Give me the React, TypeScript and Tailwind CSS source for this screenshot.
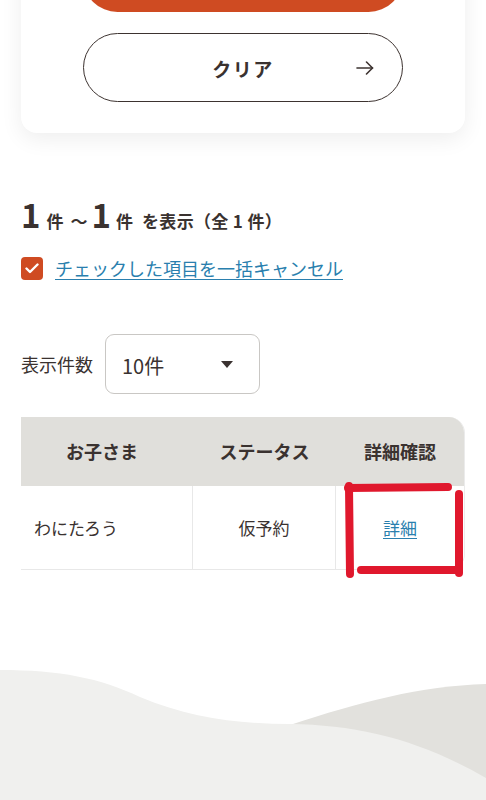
import React from "react";

const font = { fontFamily: '"Noto Sans CJK JP", "Noto Sans", sans-serif' };

const RedMark = () => (
  <svg
    className="pointer-events-none absolute left-[338px] top-[478px]"
    width="130"
    height="106"
    viewBox="0 0 130 106"
    fill="none"
    stroke="#e0182d"
    strokeWidth="8"
    strokeLinecap="round"
  >
    <path d="M10 10 L110 9" />
    <path d="M11 8 L12 96" />
    <path d="M121 16 L121 95" />
    <path d="M23 92 L121 92" />
  </svg>
);

const Waves = () => (
  <svg
    className="block mt-auto"
    width="486"
    height="200"
    viewBox="0 0 486 200"
    preserveAspectRatio="none"
  >
    <path
      d="M290 125 C360 102 420 86 486 84 L486 200 L290 200 Z"
      fill="#e2e1dd"
    />
    <path
      d="M0 70 C60 70 100 78 140 97 C190 118 240 124 290 124 C360 125 420 140 486 178 L486 200 L0 200 Z"
      fill="#f0f0ee"
    />
  </svg>
);

export default function App() {
  return (
    <div
      className="relative h-[800px] w-[486px] overflow-hidden bg-white text-[#3a3230] flex flex-col"
      style={font}
    >
      <div className="-mt-[100px] px-[21px]">
        {/* search card */}
        <div className="rounded-2xl bg-white pt-[43px] pb-[31px] shadow-[0_6px_22px_rgba(0,0,0,0.07)]">
          <div className="mx-auto h-[69px] w-[320px] rounded-full bg-[#cf4b22]" />
          <button className="relative mx-auto mt-[21px] flex h-[69px] w-[320px] items-center justify-center rounded-full border-[1.5px] border-[#3d3330] bg-white pt-[3px] text-[19px] font-bold tracking-[0.08em]">
            クリア
            <svg
              className="absolute right-[28px] top-1/2 -translate-y-1/2"
              width="18"
              height="14"
              viewBox="0 0 18 14"
              fill="none"
              stroke="#3d3330"
              strokeWidth="1.6"
              strokeLinecap="round"
              strokeLinejoin="round"
            >
              <path d="M1 7 H16.5" />
              <path d="M10.5 1 L16.5 7 L10.5 13" />
            </svg>
          </button>
        </div>

        {/* result count */}
        <div className="mt-[60px] flex items-baseline font-bold leading-[42px]">
          <span className="text-[33px]">1</span>
          <span className="ml-[6px] text-[17px]">件</span>
          <span className="ml-[7px] text-[17px]">～</span>
          <span className="ml-[4px] text-[33px]">1</span>
          <span className="ml-[5px] text-[17px]">件</span>
          <span className="ml-[9px] text-[17px] tracking-[0.02em]">を表示（全 1 件）</span>
        </div>

        <div className="mt-[13px] flex items-center gap-[12px]">
          <span className="flex h-[23px] w-[22px] items-center justify-center rounded-[4px] bg-[#cf4b22]">
            <svg
              width="14"
              height="11"
              viewBox="0 0 14 11"
              fill="none"
              stroke="#fff"
              strokeWidth="2.4"
              strokeLinecap="round"
              strokeLinejoin="round"
            >
              <path d="M1.5 5.5 L5 9 L12.5 1.5" />
            </svg>
          </span>
          <a className="text-[18px] leading-[26px] text-[#2a7fae] underline underline-offset-[3px] cursor-pointer">
            チェックした項目を一括キャンセル
          </a>
        </div>

        {/* page size */}
        <div className="mt-[53px] flex items-center gap-[12px]">
          <span className="text-[18px]">表示件数</span>
          <div className="flex h-[60px] w-[155px] items-center justify-between rounded-[9px] border border-[#c9c7c4] bg-white pl-[16px] pr-[26px]">
            <span className="mt-[4px] text-[20px]">10件</span>
            <svg width="12" height="7" viewBox="0 0 12 7">
              <path d="M0 0 H12 L6 7 Z" fill="#3a3230" />
            </svg>
          </div>
        </div>

        {/* table */}
        <div className="mt-[23px] overflow-hidden rounded-r-2xl border-r border-[#ebebeb]">
          <div className="grid grid-cols-[172px_143px_1fr] h-[69px] items-center bg-[#e0dfdb] text-[18px] font-bold">
            <div className="text-center pr-[10px]">お子さま</div>
            <div className="text-center">ステータス</div>
            <div className="text-center">詳細確認</div>
          </div>
          <div className="grid grid-cols-[172px_143px_1fr] h-[84px] items-stretch border-b border-[#e8e8e8] text-[17px]">
            <div className="flex items-center border-r border-[#e8e8e8] pl-[13px]">わにたろう</div>
            <div className="flex items-center justify-center border-r border-[#e8e8e8]">仮予約</div>
            <div className="flex items-center justify-center">
              <a className="text-[#2a7fae] underline underline-offset-[3px] cursor-pointer">詳細</a>
            </div>
          </div>
        </div>
      </div>

      <Waves />
      <RedMark />
    </div>
  );
}
